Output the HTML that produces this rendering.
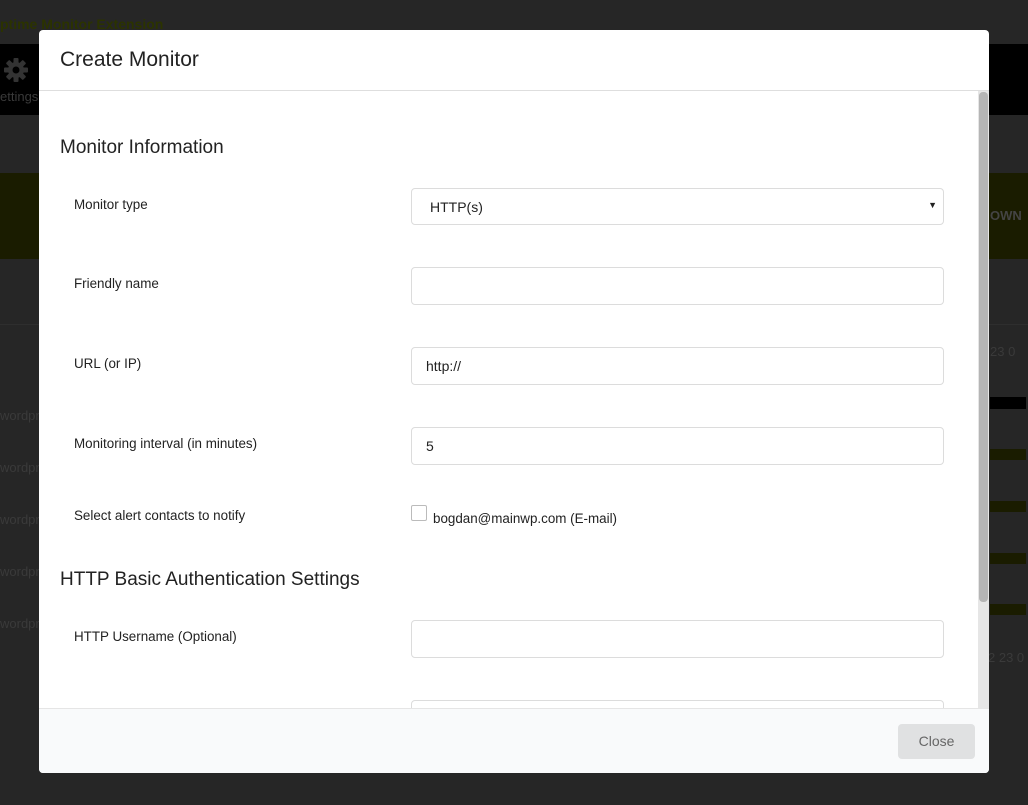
<!DOCTYPE html>
<html><head><meta charset="utf-8"><style>
*{box-sizing:border-box;margin:0;padding:0}
body{width:1028px;height:805px;overflow:hidden;background:#262626;font-family:"Liberation Sans",sans-serif;position:relative}
.bg{position:absolute}
.modal{position:absolute;left:39px;top:30px;width:950px;height:743px;background:#fff;border-radius:4px;overflow:hidden}
.hd{height:61px;border-bottom:1px solid #dedede;padding:18px 21px;font-size:21px;color:#222}
.ft{position:absolute;left:0;right:0;top:678px;bottom:0;background:#f9fafb;border-top:1px solid #e5e5e5}
.btn{position:absolute;right:14px;top:15px;width:77px;height:35px;background:#e0e1e2;border-radius:4px;color:#666;font-size:14px;text-align:center;line-height:35px}
.sb{position:absolute;left:939px;top:61px;width:11px;height:617px;background:#e6e6e6}
.th{position:absolute;left:940px;top:62px;width:9px;height:510px;background:#b5b5b5;border-radius:4px}
.h{position:absolute;left:21px;font-size:19px;color:#222}
.l{position:absolute;left:35px;font-size:13.4px;color:#222}
.in{position:absolute;left:372px;width:533px;height:38px;border:1px solid #dcdcdc;border-radius:4px;font-size:14px;color:#222;padding:10px 14px}
</style></head><body>
<div class="bg" style="left:0;top:16px;font-size:14px;font-weight:bold;color:#2b3300">ptime Monitor Extension</div>
<div class="bg" style="left:0;top:44px;width:1028px;height:71px;background:#000"></div>
<svg class="bg" style="left:3px;top:57px" width="26" height="26" viewBox="0 0 26 26"><g fill="#333"><circle cx="13" cy="13" r="8"/><rect x="10.5" y="1" width="5" height="24" rx="1"/><rect x="1" y="10.5" width="24" height="5" rx="1"/><rect x="10.5" y="1" width="5" height="24" rx="1" transform="rotate(45 13 13)"/><rect x="10.5" y="1" width="5" height="24" rx="1" transform="rotate(-45 13 13)"/></g><circle cx="13" cy="13" r="3.5" fill="#000"/></svg>
<div class="bg" style="left:0;top:89px;font-size:13px;color:#3a3a3a">ettings</div>
<div class="bg" style="left:0;top:173px;width:1028px;height:86px;background:#1a1c00"></div>
<div class="bg" style="left:990px;top:208px;font-size:13px;font-weight:bold;color:#444">OWN</div>
<div class="bg" style="left:0;top:324px;width:1028px;height:1px;background:#2e2e2e"></div>
<div class="bg" style="left:990px;top:344px;font-size:13px;color:#3a3a3a">23 0</div>
<div class="bg" style="left:990px;top:397px;width:36px;height:12px;background:#000"></div>
<div class="bg" style="left:990px;top:449px;width:36px;height:11px;background:#1a1c00"></div>
<div class="bg" style="left:990px;top:501px;width:36px;height:11px;background:#1a1c00"></div>
<div class="bg" style="left:990px;top:553px;width:36px;height:11px;background:#1a1c00"></div>
<div class="bg" style="left:990px;top:604px;width:36px;height:11px;background:#1a1c00"></div>
<div class="bg" style="left:988px;top:650px;font-size:13px;color:#3a3a3a">2 23 0</div>
<div class="bg" style="left:0;top:390px;font-size:13px;color:#3a3a3a;line-height:52px">wordpr<br>wordpr<br>wordpr<br>wordpr<br>wordpr</div>
<div class="modal">
<div class="hd">Create Monitor</div>
<div class="h" style="top:107px">Monitor Information</div>
<div class="l" style="top:167px">Monitor type</div>
<div class="in" style="top:158px;height:37px;padding-left:18px">HTTP(s)<span style="position:absolute;right:6px;top:11px;font-size:9px">▼</span></div>
<div class="l" style="top:246px">Friendly name</div>
<div class="in" style="top:237px"></div>
<div class="l" style="top:326px">URL (or IP)</div>
<div class="in" style="top:317px">http://</div>
<div class="l" style="top:406px">Monitoring interval (in minutes)</div>
<div class="in" style="top:397px">5</div>
<div class="l" style="top:478px">Select alert contacts to notify</div>
<div style="position:absolute;left:372px;top:475px;width:16px;height:16px;border:1px solid #bbb;border-radius:2px"></div>
<div class="l" style="left:394px;top:481px">bogdan@mainwp.com (E-mail)</div>
<div class="h" style="top:539px">HTTP Basic Authentication Settings</div>
<div class="l" style="top:599px">HTTP Username (Optional)</div>
<div class="in" style="top:590px"></div>
<div class="in" style="top:670px"></div>
<div class="sb"></div><div class="th"></div>
<div class="ft"><div class="btn">Close</div></div>
</div>
</body></html>
